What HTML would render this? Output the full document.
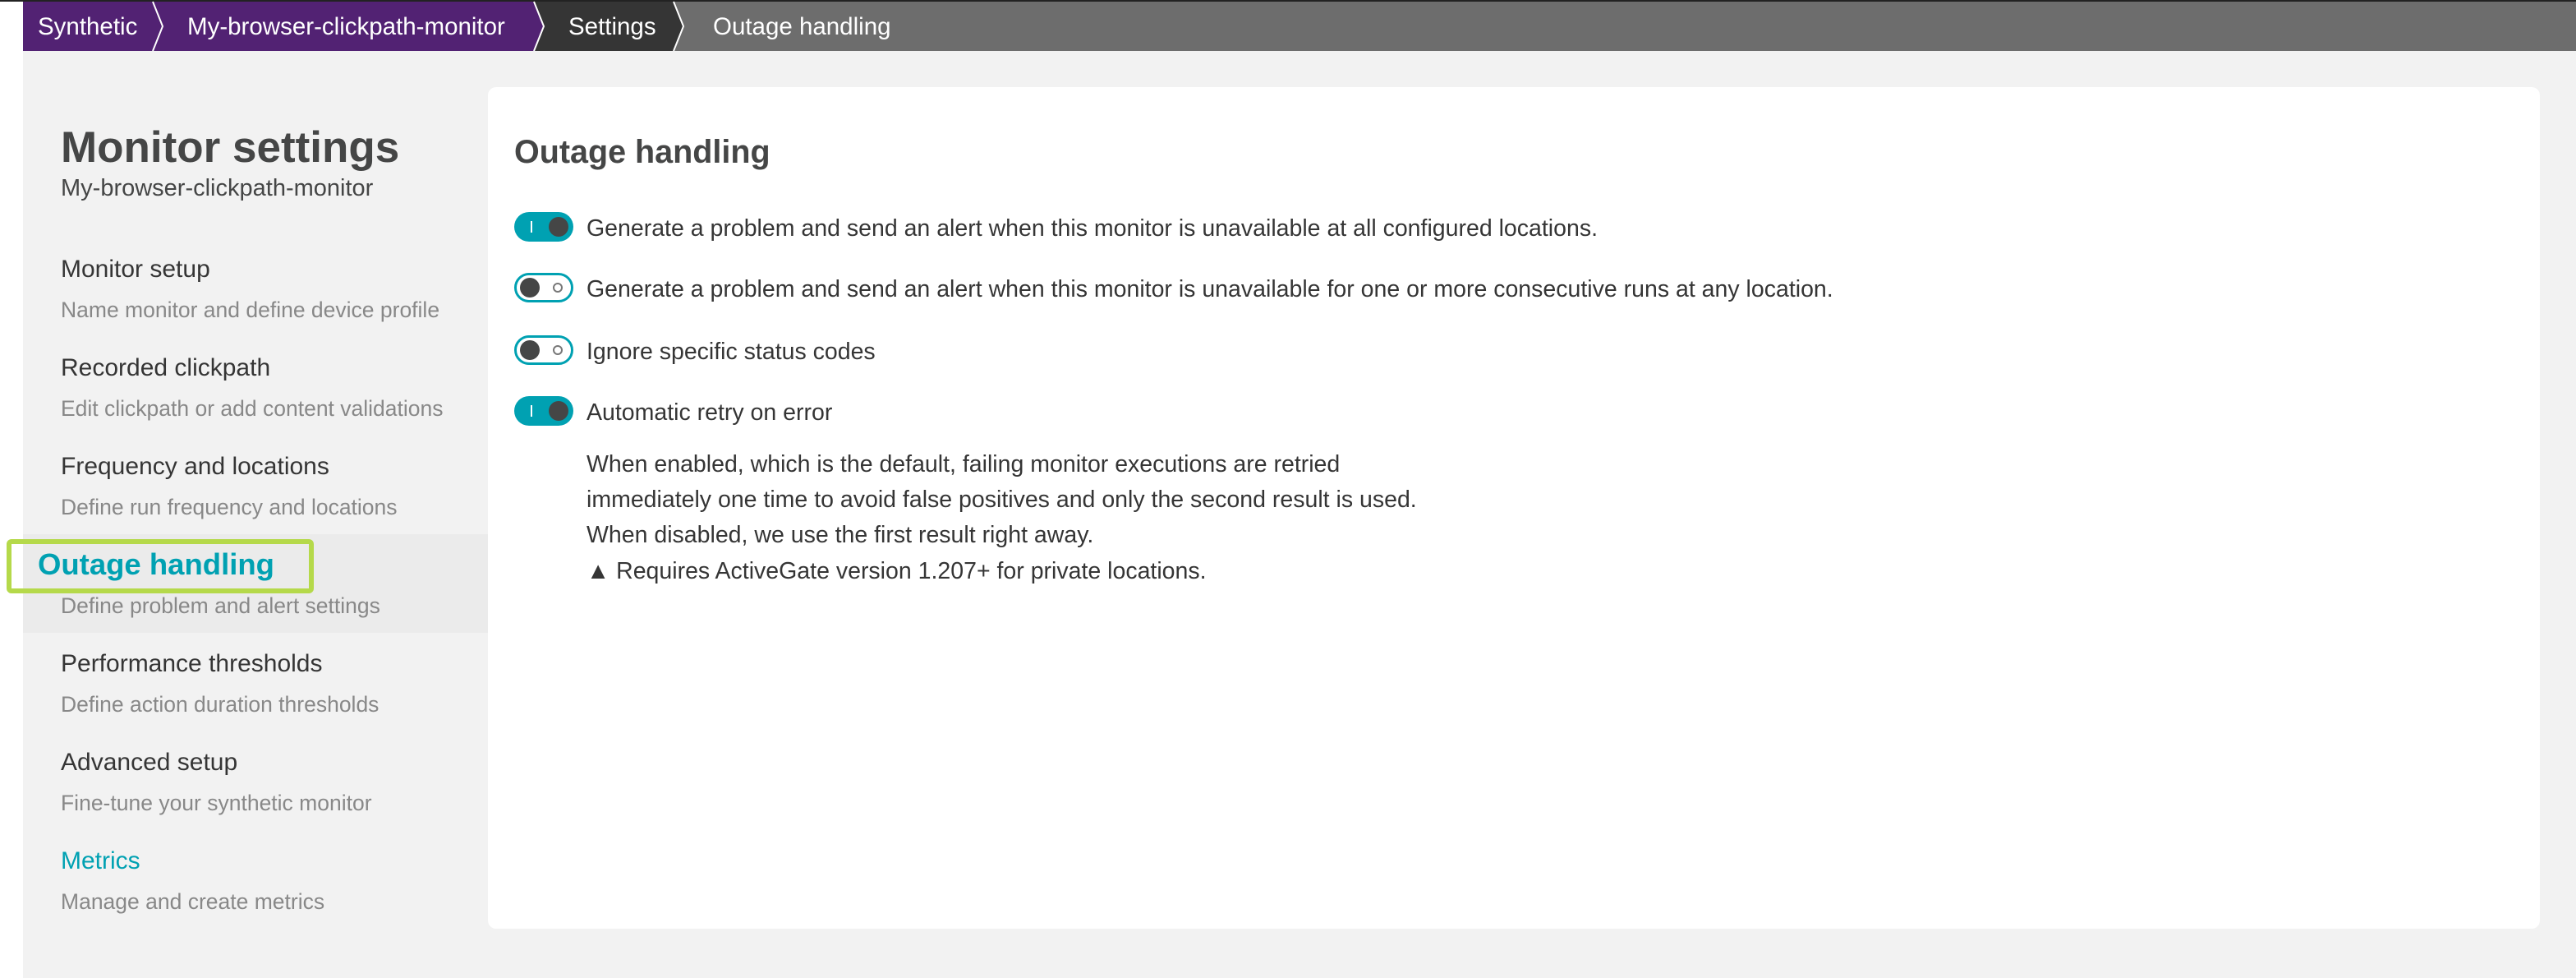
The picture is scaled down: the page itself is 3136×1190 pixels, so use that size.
<!DOCTYPE html>
<html><head><meta charset="utf-8"><style>
*{margin:0;padding:0;box-sizing:border-box}
body{width:3136px;height:1190px;background:#fff;position:relative;overflow:hidden;font-family:"Liberation Sans",sans-serif;color:#353535}
.a{position:absolute;white-space:nowrap;line-height:1}
.gray{position:absolute;left:28px;top:62px;width:3108px;height:1128px;background:#f2f2f2}
.card{position:absolute;left:594px;top:106px;width:2498px;height:1024px;background:#fff;border-radius:10px}
.bc{color:#fff;font-size:29.5px}
.nt{font-size:30px;color:#353535;left:74px}
.nd{font-size:26.5px;color:#888;left:74px}
.tg{position:absolute;left:626px;width:72px;height:36px;border-radius:18px}
.on{background:#00a1b2}
.on:before{content:"";position:absolute;left:20px;top:11px;width:2px;height:14px;background:#fff}
.on:after{content:"";position:absolute;right:6px;top:6px;width:24px;height:24px;border-radius:50%;background:#454646}
.off{background:#fff;border:3px solid #00a1b2}
.off:before{content:"";position:absolute;left:4px;top:3px;width:24px;height:24px;border-radius:50%;background:#454646}
.off:after{content:"";position:absolute;right:10px;top:9px;width:12px;height:12px;border-radius:50%;border:2px solid #777;box-sizing:border-box}
.tx{font-size:28.5px;left:714px;color:#353535}
</style></head><body>
<svg class="a" style="left:0;top:0" width="3136" height="62">
<rect x="0" y="0" width="3136" height="2" fill="#222"/>
<rect x="28" y="2" width="3108" height="60" fill="#6d6d6d"/>
<polygon points="28,2 820,2 832,32 820,62 28,62" fill="#353535"/>
<polygon points="28,2 650,2 662,32 650,62 28,62" fill="#522273"/>
<polyline points="186,2 198,32 186,62" fill="none" stroke="#fff" stroke-width="2"/>
<polyline points="650,2 662,32 650,62" fill="none" stroke="#fff" stroke-width="2"/>
<polyline points="820,2 832,32 820,62" fill="none" stroke="#fff" stroke-width="2"/>
</svg>
<div class="a bc" style="left:46px;top:18px">Synthetic</div>
<div class="a bc" style="left:228px;top:18px">My-browser-clickpath-monitor</div>
<div class="a bc" style="left:692px;top:18px">Settings</div>
<div class="a bc" style="left:868px;top:18px">Outage handling</div>
<div class="gray"></div>
<div class="a" style="left:28px;top:650px;width:566px;height:120px;background:#ebebeb"></div>
<div class="a" style="left:74px;top:153px;font-size:53px;font-weight:bold;color:#454646">Monitor settings</div>
<div class="a" style="left:74px;top:215px;font-size:29px;color:#454646">My-browser-clickpath-monitor</div>
<div class="a nt" style="top:313px">Monitor setup</div>
<div class="a nd" style="top:364px">Name monitor and define device profile</div>
<div class="a nt" style="top:433px">Recorded clickpath</div>
<div class="a nd" style="top:484px">Edit clickpath or add content validations</div>
<div class="a nt" style="top:553px">Frequency and locations</div>
<div class="a nd" style="top:604px">Define run frequency and locations</div>
<div class="a" style="left:8px;top:656px;width:374px;height:66px;border:6px solid #b5d94a;border-radius:6px"></div>
<div class="a" style="left:46px;top:669px;font-size:36.5px;font-weight:bold;color:#00a1b2">Outage handling</div>
<div class="a nd" style="top:724px">Define problem and alert settings</div>
<div class="a nt" style="top:793px">Performance thresholds</div>
<div class="a nd" style="top:844px">Define action duration thresholds</div>
<div class="a nt" style="top:913px">Advanced setup</div>
<div class="a nd" style="top:964px">Fine-tune your synthetic monitor</div>
<div class="a nt" style="top:1033px;color:#00a1b2">Metrics</div>
<div class="a nd" style="top:1084px">Manage and create metrics</div>
<div class="card"></div>
<div class="a" style="left:626px;top:166px;font-size:39.5px;font-weight:bold;color:#454646">Outage handling</div>
<div class="tg on" style="top:258px"></div>
<div class="a tx" style="top:264px">Generate a problem and send an alert when this monitor is unavailable at all configured locations.</div>
<div class="tg off" style="top:332px"></div>
<div class="a tx" style="top:338px">Generate a problem and send an alert when this monitor is unavailable for one or more consecutive runs at any location.</div>
<div class="tg off" style="top:408px"></div>
<div class="a tx" style="top:414px">Ignore specific status codes</div>
<div class="tg on" style="top:482px"></div>
<div class="a tx" style="top:488px">Automatic retry on error</div>
<div class="a tx" style="top:551px">When enabled, which is the default, failing monitor executions are retried</div>
<div class="a tx" style="top:594px">immediately one time to avoid false positives and only the second result is used.</div>
<div class="a tx" style="top:637px">When disabled, we use the first result right away.</div>
<div class="a tx" style="top:681px">▲ Requires ActiveGate version 1.207+ for private locations.</div>
</body></html>
